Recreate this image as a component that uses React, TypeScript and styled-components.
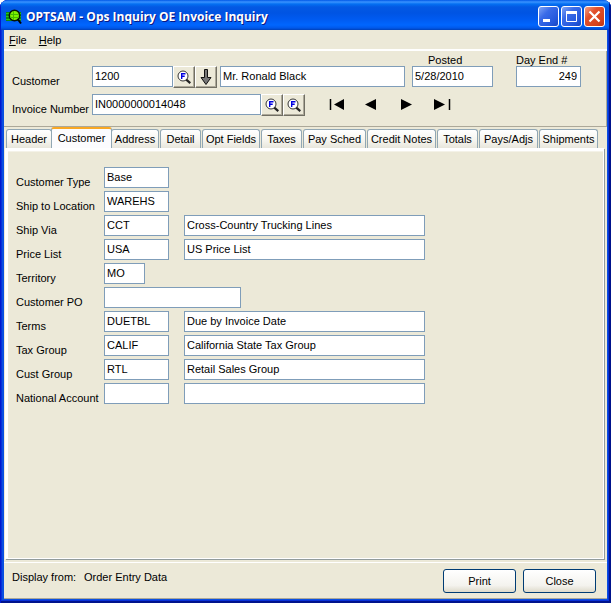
import React from "react";
import styled, { createGlobalStyle, css } from "styled-components";

const face = "#ece9d8";
const fieldBorder = "#7f9db9";

const GlobalStyle = createGlobalStyle`
  * { box-sizing: border-box; }
  body { margin: 0; background: #fff; }
  body, input, button { font-family: "Liberation Sans", Arial, sans-serif; font-size: 11px; line-height: 14px; color: #000; }
  button { padding: 0; }
`;

const Window = styled.div`
  min-height: 100vh;
  display: flex;
  flex-direction: column;
  padding: 0 4px 4px 4px;
  border-radius: 8px 8px 0 0;
  overflow: hidden;
  background: #0a4fe0;
  box-shadow: inset 1px 0 #0019cf, inset -2px -2px #00138c, inset 2px 0 #0831d9, inset -3px -3px #0831d9;
`;

const TitleBar = styled.header`
  height: 30px;
  margin: 0 -4px;
  padding: 3px 6px 0 6px;
  display: flex;
  align-items: center;
  gap: 4px;
  background: linear-gradient(#0058e6 0, #3a93ff 2px, #0470f2 4px, #0359e3 7px, #0054e3 13px, #005af0 19px, #0066ff 25px, #0058ea 28px, #0040b8 30px);
  box-shadow: inset 1px 0 #0019cf, inset -2px 0 #00138c;
`;

const Title = styled.h1`
  flex: 1;
  margin: 0;
  font-family: "Open Sans", sans-serif;
  font-weight: 700;
  font-size: 12px;
  line-height: 18px;
  color: #fff;
  text-shadow: 1px 1px #0a1883;
  white-space: nowrap;
`;

const CaptionButtons = styled.div`
  display: flex;
  gap: 2px;
`;

const CaptionButton = styled.button<{ $close?: boolean }>`
  width: 21px;
  height: 21px;
  border: 1px solid #fff;
  border-radius: 3px;
  background: ${(p) =>
    p.$close
      ? "linear-gradient(135deg, #f0a088, #e2502c 35%, #d8431c 75%, #b83512)"
      : "linear-gradient(135deg, #7fa4f5, #3a6be8 35%, #2458dc 75%, #1846c0)"};
  svg { display: block; }
`;

const Client = styled.main`
  flex: 1;
  display: flex;
  flex-direction: column;
  background: ${face};
`;

const MenuBar = styled.nav`
  height: 21px;
  display: flex;
  align-items: center;
  gap: 12px;
  padding: 0 5px;
  border-bottom: 2px solid #fff;
`;

const MenuItem = styled.button`
  border: 0;
  background: none;
`;

const Lookup = styled.section`
  height: 76px;
  padding: 15px 8px 0 8px;
  display: flex;
  flex-direction: column;
  gap: 7px;
  border-bottom: 1px solid #aca899;
  border-right: 1px solid #aca899;
`;

const LookupRow = styled.div`
  display: flex;
  height: 21px;
`;

const Label = styled.label`
  flex: 0 0 auto;
  padding-top: 8px;
  white-space: nowrap;
`;

const LookupLabel = styled(Label)`
  width: 80px;
`;

const Field = styled.input<{ $width: number; $right?: boolean }>`
  width: ${(p) => p.$width}px;
  height: 21px;
  padding: 0 3px 2px 2px;
  border: 1px solid ${fieldBorder};
  border-radius: 0;
  background: #fff;
  text-align: ${(p) => (p.$right ? "right" : "left")};
`;

const ToolButton = styled.button`
  width: 22px;
  height: 22px;
  display: grid;
  place-items: center;
  border: 1px solid;
  border-color: #fff #716f64 #716f64 #fff;
  box-shadow: inset -1px -1px #aca899;
  background: ${face};
`;

const Captioned = styled.div<{ $before: number }>`
  display: flex;
  flex-direction: column;
  margin: -12px 0 0 ${(p) => p.$before}px;
`;

const Caption = styled.label<{ $indent?: boolean }>`
  height: 12px;
  line-height: 12px;
  padding-left: ${(p) => (p.$indent ? 16 : 0)}px;
`;

const Spacer = styled.div`
  width: 3px;
`;

const NavGroup = styled.div`
  display: flex;
  align-items: center;
  gap: 19px;
  margin-left: 24px;
`;

const NavButton = styled.button`
  width: 16px;
  height: 16px;
  border: 0;
  background: none;
  svg { display: block; }
`;

const Tabs = styled.div`
  height: 21px;
  display: flex;
  align-items: flex-end;
  gap: 1px;
  padding-left: 2px;
`;

const Tab = styled.button<{ $width: number; $active?: boolean }>`
  flex: 0 0 ${(p) => p.$width}px;
  height: 19px;
  border: 1px solid #91a7b4;
  border-bottom: 0;
  border-radius: 3px 3px 0 0;
  background: linear-gradient(#fff, #f5f4ee 60%, #e8e6dc);
  white-space: nowrap;
  ${(p) =>
    p.$active &&
    css`
      height: 21px;
      padding: 0 0 2px;
      margin: 0 -2px;
      border-top: 2px solid #f9a825;
      background: #fcfcfe;
    `}
`;

const Panel = styled.section`
  flex: 1;
  margin: 0 3px 0 1px;
  padding: 16px 8px;
  border: solid #fff;
  border-width: 3px 1px 1px 3px;
  box-shadow: 1px 1px #919b9c, inset 0 1px #f4f2e8;
  background: ${face};
  display: flex;
  flex-direction: column;
  gap: 3px;
`;

const FormRow = styled.div`
  display: flex;
  height: 21px;
`;

const FormLabel = styled(Label)`
  width: 88px;
`;

const DescriptionField = styled(Field)`
  margin-left: 15px;
`;

const Footer = styled.footer`
  height: 37px;
  margin-top: 3px;
  padding: 0 11px 0 8px;
  display: flex;
  align-items: center;
  gap: 7px;
  border-top: 1px solid #fff;
  border-bottom: 1px solid #aca899;
`;

const Status = styled.p`
  flex: 1;
  display: grid;
  grid-template-columns: 72px 1fr;
  margin: 0;
  padding-bottom: 8px;
`;

const PushButton = styled.button`
  width: 73px;
  height: 24px;
  border: 1px solid #003c74;
  border-radius: 3px;
  background: linear-gradient(#fff, #f4f3ee 70%, #dedacb);
`;

const AppIcon = () => (
  <svg width="16" height="16" viewBox="0 0 16 16">
    <path d="M0 3h15v9H0z" fill="#0b8a0b" />
    <path d="M0 4.5h15M0 7.5h15M0 10.5h15" stroke="#29c51c" />
    <circle cx="8.5" cy="6.5" r="5.2" fill="#7cf000" stroke="#061306" strokeWidth="1.5" />
    <path d="M4 5.5h9M4 8.5h9M7.5 2v9" stroke="#46b800" />
    <path d="M12 10.5l3 4" stroke="#000" strokeWidth="2" />
  </svg>
);

const Finder = ({ label }: { label: string }) => (
  <ToolButton aria-label={label}>
    <svg width="14" height="14" viewBox="0 0 14 14">
      <circle cx="6" cy="6" r="5" fill="#fff" stroke="#333" />
      <path d="M4.7 9V3.7h3.8M4.7 6.3h3" fill="none" stroke="#0000e0" strokeWidth="1.4" />
      <path d="M9.3 9.6l4 3.5" stroke="#222" strokeWidth="2.2" />
    </svg>
  </ToolButton>
);

const navShapes = [
  { name: "First", bar: "M1.5 2v11", arrow: "M15 2v11L5 7.5z" },
  { name: "Previous", bar: "", arrow: "M12 2v11L1 7.5z" },
  { name: "Next", bar: "", arrow: "M2 2v11L13 7.5z" },
  { name: "Last", bar: "M15.5 2v11", arrow: "M0 2v11L11 7.5z" },
];

const tabs: [string, number][] = [
  ["Header", 46], ["Customer", 61], ["Address", 48], ["Detail", 41], ["Opt Fields", 58], ["Taxes", 41],
  ["Pay Sched", 63], ["Credit Notes", 69], ["Totals", 41], ["Pays/Adjs", 59], ["Shipments", 59],
];

const rows: { label: string; code: string; width?: number; text?: string }[] = [
  { label: "Customer Type", code: "Base" },
  { label: "Ship to Location", code: "WAREHS" },
  { label: "Ship Via", code: "CCT", text: "Cross-Country Trucking Lines" },
  { label: "Price List", code: "USA", text: "US Price List" },
  { label: "Territory", code: "MO", width: 41 },
  { label: "Customer PO", code: "", width: 137 },
  { label: "Terms", code: "DUETBL", text: "Due by Invoice Date" },
  { label: "Tax Group", code: "CALIF", text: "California State Tax Group" },
  { label: "Cust Group", code: "RTL", text: "Retail Sales Group" },
  { label: "National Account", code: "", text: "" },
];

export default function App() {
  return (
    <>
      <GlobalStyle />
      <Window>
        <TitleBar>
          <AppIcon />
          <Title>OPTSAM - Ops Inquiry OE Invoice Inquiry</Title>
          <CaptionButtons>
            <CaptionButton aria-label="Minimize">
              <svg width="19" height="19"><path d="M4 13.5h7" stroke="#fff" strokeWidth="3" /></svg>
            </CaptionButton>
            <CaptionButton aria-label="Maximize">
              <svg width="19" height="19"><path d="M4.5 5v9.5h10V5M4 5.5h11" fill="none" stroke="#fff" /><path d="M4 5.5h11" stroke="#fff" strokeWidth="3" /></svg>
            </CaptionButton>
            <CaptionButton $close aria-label="Close window">
              <svg width="19" height="19"><path d="M4.5 4.5l10 10M14.5 4.5l-10 10" stroke="#fff" strokeWidth="2.2" /></svg>
            </CaptionButton>
          </CaptionButtons>
        </TitleBar>
        <Client>
          <MenuBar>
            <MenuItem><u>F</u>ile</MenuItem>
            <MenuItem><u>H</u>elp</MenuItem>
          </MenuBar>
          <Lookup>
            <LookupRow>
              <LookupLabel htmlFor="customer">Customer</LookupLabel>
              <Field id="customer" $width={81} defaultValue="1200" />
              <Finder label="Find customer" />
              <ToolButton aria-label="Go to customer">
                <svg width="12" height="16" viewBox="0 0 12 16">
                  <path d="M4.5 0.5h3v8h3.5L6 15.5 1 8.5h3.5z" fill="#777" stroke="#111" />
                </svg>
              </ToolButton>
              <Spacer />
              <Field aria-label="Customer name" $width={185} defaultValue="Mr. Ronald Black" />
              <Captioned $before={7}>
                <Caption $indent htmlFor="posted">Posted</Caption>
                <Field id="posted" $width={81} defaultValue="5/28/2010" />
              </Captioned>
              <Captioned $before={23}>
                <Caption htmlFor="dayend">Day End #</Caption>
                <Field id="dayend" $width={65} $right defaultValue="249" />
              </Captioned>
            </LookupRow>
            <LookupRow>
              <LookupLabel htmlFor="invoice">Invoice Number</LookupLabel>
              <Field id="invoice" $width={169} defaultValue="IN0000000014048" />
              <Finder label="Find invoice" />
              <Finder label="Find invoice by customer" />
              <NavGroup>
                {navShapes.map((n) => (
                  <NavButton key={n.name} aria-label={n.name}>
                    <svg width="17" height="16" viewBox="0 0 17 16">
                      <path d={n.arrow} />
                      {n.bar && <path d={n.bar} stroke="#000" strokeWidth="1.5" />}
                    </svg>
                  </NavButton>
                ))}
              </NavGroup>
            </LookupRow>
          </Lookup>
          <Tabs role="tablist">
            {tabs.map(([name, width]) => (
              <Tab key={name} role="tab" aria-selected={name === "Customer"} $width={width} $active={name === "Customer"}>
                {name}
              </Tab>
            ))}
          </Tabs>
          <Panel role="tabpanel">
            {rows.map((r) => (
              <FormRow key={r.label}>
                <FormLabel htmlFor={r.label}>{r.label}</FormLabel>
                <Field id={r.label} $width={r.width ?? 65} defaultValue={r.code} />
                {r.text !== undefined && (
                  <DescriptionField aria-label={`${r.label} description`} $width={241} defaultValue={r.text} />
                )}
              </FormRow>
            ))}
          </Panel>
          <Footer>
            <Status><span>Display from:</span><span>Order Entry Data</span></Status>
            <PushButton>Print</PushButton>
            <PushButton>Close</PushButton>
          </Footer>
        </Client>
      </Window>
    </>
  );
}
